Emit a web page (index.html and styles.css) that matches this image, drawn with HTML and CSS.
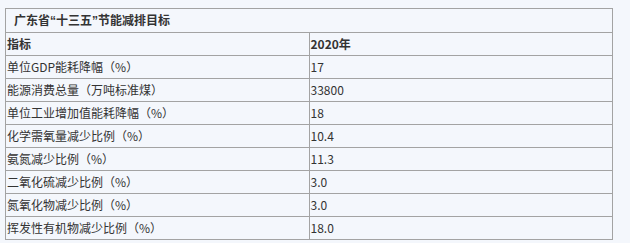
FILE: index.html
```html
<!DOCTYPE html>
<html lang="zh">
<head>
<meta charset="utf-8">
<link rel="stylesheet" href="styles.css">
</head>
<body>
<table class="tbl">
  <tr><td class="title" colspan="2">广东省<span class="q">“</span>十三五<span class="q">”</span>节能减排目标</td></tr>
  <tr class="head"><td class="c1">指标</td><td class="c2">2020年</td></tr>
  <tr><td class="c1">单位GDP能耗降幅（%）</td><td class="c2">17</td></tr>
  <tr><td class="c1">能源消费总量（万吨标准煤）</td><td class="c2">33800</td></tr>
  <tr><td class="c1">单位工业增加值能耗降幅（%）</td><td class="c2">18</td></tr>
  <tr><td class="c1">化学需氧量减少比例（%）</td><td class="c2">10.4</td></tr>
  <tr><td class="c1">氨氮减少比例（%）</td><td class="c2">11.3</td></tr>
  <tr><td class="c1">二氧化硫减少比例（%）</td><td class="c2">3.0</td></tr>
  <tr><td class="c1">氮氧化物减少比例（%）</td><td class="c2">3.0</td></tr>
  <tr><td class="c1">挥发性有机物减少比例（%）</td><td class="c2">18.0</td></tr>
</table>
</body>
</html>
```
FILE: styles.css
```css
html, body {
  margin: 0;
  background: #f4f7fc;
}
body {
  padding: 8px 0 0 5px;
  font-family: "Noto Sans CJK SC", "Microsoft YaHei", sans-serif;
  font-size: 12px;
  color: #333;
}
.tbl {
  border-collapse: collapse;
  width: 608px;
  table-layout: fixed;
}
.tbl td {
  border: 1px solid #a3a3a3;
  padding: 0 1px;
  line-height: 22px;
  white-space: nowrap;
}
.tbl td.title {
  font-weight: bold;
  padding-left: 8px;
}
.q {
  font-family: "Liberation Sans", sans-serif;
}
.head td {
  font-weight: bold;
}
.c1 {
  width: 310px;
}
```
